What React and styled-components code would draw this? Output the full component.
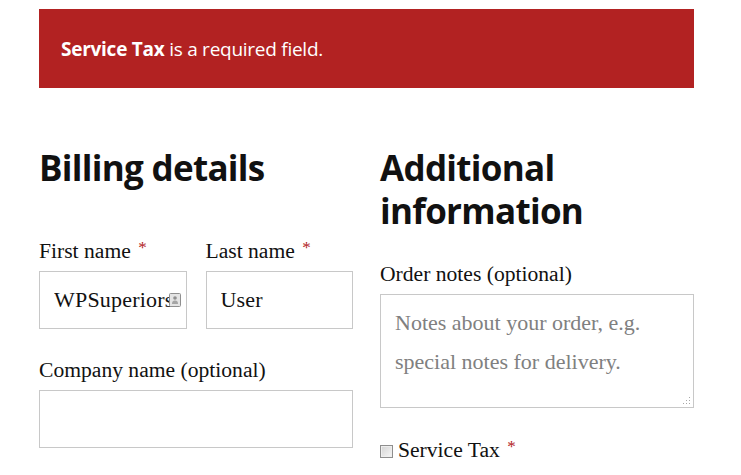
import React from 'react';
import styled, { createGlobalStyle } from 'styled-components';

const GlobalStyle = createGlobalStyle`
  html, body {
    margin: 0;
    padding: 0;
    background: #fff;
    overflow: hidden;
  }
  body {
    font-family: "Liberation Serif", serif;
    color: #111;
  }
`;

const Page = styled.div`
  width: 655px;
  height: 475px;
  padding: 9px 0 0 39px;
  overflow: hidden;
`;

const Alert = styled.div`
  height: 79px;
  background: #b22222;
  color: #fff;
  font-family: "Open Sans", sans-serif;
  font-size: 19px;
  line-height: 81px;
  padding-left: 22px;
  margin-bottom: 58px;
  box-sizing: border-box;
  letter-spacing: -0.26px;

  strong {
    font-weight: 700;
  }
`;

const Columns = styled.div`
  display: grid;
  grid-template-columns: 314px 314px;
  column-gap: 27px;
`;

const Heading = styled.h3`
  margin: 0;
  font-family: "Open Sans", sans-serif;
  font-weight: 700;
  font-size: 35px;
  line-height: 43px;
  letter-spacing: -0.7px;
  color: #111;
`;

const Row = styled.div`
  display: flex;
  gap: 19px;
  margin-top: ${(p) => p.$top || 0}px;
`;

const Field = styled.div`
  flex: 1;
  min-width: 0;
  position: relative;
`;

const Label = styled.label`
  display: block;
  font-size: 21.6px;
  line-height: 30px;
  height: 30px;
  margin-bottom: 5px;
  color: #111;
`;

const Star = styled.span`
  color: #b22222;
  font-size: 17px;
  line-height: 0;
  margin-left: 2px;
  vertical-align: 5px;
`;

const Input = styled.input`
  display: block;
  width: 100%;
  height: 58px;
  box-sizing: border-box;
  border: 1px solid #c8c8c8;
  padding: 0 ${(p) => p.$right || 14}px 1px 14px;
  font-family: "Liberation Serif", serif;
  font-size: 22px;
  letter-spacing: 0.2px;
  color: #111;
  background: #fff;
  outline: none;
`;

const ContactIcon = styled.svg`
  position: absolute;
  right: 6px;
  top: 57px;
  width: 12px;
  height: 14px;
`;

const Textarea = styled.textarea`
  display: block;
  width: 100%;
  height: 114px;
  box-sizing: border-box;
  border: 1px solid #c8c8c8;
  padding: 8px 14px;
  font-family: "Liberation Serif", serif;
  font-size: 22px;
  line-height: 39px;
  background: #fff;
  outline: none;
  resize: none;

  &::placeholder {
    color: #808080;
    opacity: 1;
  }
`;

const ResizeGrip = styled.svg`
  position: absolute;
  right: 3px;
  bottom: 2px;
  width: 9px;
  height: 9px;
`;

const CheckRow = styled.label`
  display: flex;
  align-items: center;
  margin-top: 27px;
  font-size: 21.6px;
  line-height: 30px;
  color: #111;
`;

const Checkbox = styled.input`
  appearance: none;
  width: 13px;
  height: 13px;
  margin: 2px 5px 0 0;
  border: 1px solid #8e8e8e;
  box-sizing: border-box;
  background: linear-gradient(135deg, #d4d4d4, #f6f6f6);
  box-shadow: inset 0 0 0 1px #eee;
`;

const App = () => (
  <Page>
    <GlobalStyle />
    <Alert role="alert">
      <strong>Service Tax</strong> is a required field.
    </Alert>
    <Columns>
      <div>
        <Heading>Billing details</Heading>
        <Row $top={47}>
          <Field>
            <Label>
              First name <Star>*</Star>
            </Label>
            <Input defaultValue="WPSuperiors" $right={15} />
            <ContactIcon viewBox="0 0 12 14">
              <rect x="0.5" y="0.5" width="11" height="13" rx="1" fill="#e4e4e4" stroke="#8f8f8f" />
              <circle cx="6" cy="5" r="1.8" fill="#8f8f8f" />
              <path d="M3 11c0-3 1.5-3.5 3-3.5S9 8 9 11z" fill="#a5a5a5" />
            </ContactIcon>
          </Field>
          <Field>
            <Label>
              Last name <Star>*</Star>
            </Label>
            <Input defaultValue="User" />
          </Field>
        </Row>
        <Row $top={26}>
          <Field>
            <Label>Company name (optional)</Label>
            <Input />
          </Field>
        </Row>
      </div>
      <div>
        <Heading>Additional information</Heading>
        <Row $top={27}>
          <Field>
            <Label>Order notes (optional)</Label>
            <Textarea placeholder="Notes about your order, e.g. special notes for delivery." />
            <ResizeGrip viewBox="0 0 9 9">
              <g fill="#a8a8a8">
                <rect x="7" y="0" width="1" height="1" />
                <rect x="4" y="3" width="1" height="1" />
                <rect x="7" y="3" width="1" height="1" />
                <rect x="1" y="6" width="1" height="1" />
                <rect x="4" y="6" width="1" height="1" />
                <rect x="7" y="6" width="1" height="1" />
              </g>
            </ResizeGrip>
          </Field>
        </Row>
        <CheckRow>
          <Checkbox type="checkbox" />
          <span>
            Service Tax <Star>*</Star>
          </span>
        </CheckRow>
      </div>
    </Columns>
  </Page>
);

export default App;
